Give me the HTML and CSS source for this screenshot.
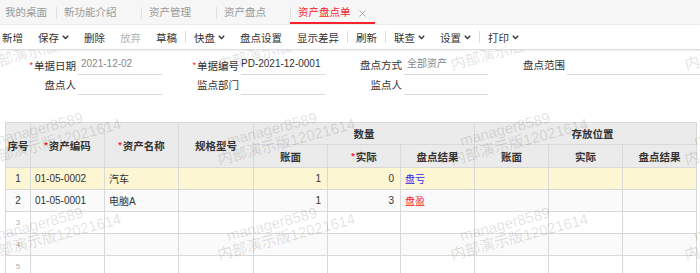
FILE: index.html
```html
<!DOCTYPE html>
<html lang="zh-CN">
<head>
  <meta charset="UTF-8" />
  <meta name="viewport" content="width=device-width, initial-scale=1" />
  <title>资产盘点单</title>
  <link rel="stylesheet" href="styles.css">
</head>
<body>

  <div class="tabs">
    <div class="tab tab-first">我的桌面</div>
    <div class="tab tab-wide">新功能介绍</div>
    <div class="tab">资产管理</div>
    <div class="tab tab-narrow">资产盘点</div>
    <div class="tab tab-wide tab-active">资产盘点单
      <svg class="tab-close" width="7" height="7" viewBox="0 0 7 7"><path d="M0.5 0.5L6.5 6.5M6.5 0.5L0.5 6.5" stroke="#aaa" stroke-width="1"/></svg>
    </div>
  </div>

  <div class="toolbar">
    <span class="tool">新增</span>
    <span class="tool">保存<svg class="caret" width="7" height="5" viewBox="0 0 7 5"><path d="M0.8 0.8L3.5 3.5L6.2 0.8" fill="none" stroke="#333" stroke-width="1.4"/></svg></span>
    <span class="tool">删除</span>
    <span class="tool tool-off">放弃</span>
    <span class="tool">草稿</span>
    <span class="tool-sep"></span>
    <span class="tool">快盘<svg class="caret" width="7" height="5" viewBox="0 0 7 5"><path d="M0.8 0.8L3.5 3.5L6.2 0.8" fill="none" stroke="#333" stroke-width="1.4"/></svg></span>
    <span class="tool">盘点设置</span>
    <span class="tool">显示差异</span>
    <span class="tool-sep"></span>
    <span class="tool">刷新</span>
    <span class="tool-sep"></span>
    <span class="tool">联查<svg class="caret" width="7" height="5" viewBox="0 0 7 5"><path d="M0.8 0.8L3.5 3.5L6.2 0.8" fill="none" stroke="#333" stroke-width="1.4"/></svg></span>
    <span class="tool">设置<svg class="caret" width="7" height="5" viewBox="0 0 7 5"><path d="M0.8 0.8L3.5 3.5L6.2 0.8" fill="none" stroke="#333" stroke-width="1.4"/></svg></span>
    <span class="tool-sep"></span>
    <span class="tool">打印<svg class="caret" width="7" height="5" viewBox="0 0 7 5"><path d="M0.8 0.8L3.5 3.5L6.2 0.8" fill="none" stroke="#333" stroke-width="1.4"/></svg></span>
  </div>

  <div class="content">
    <div class="bill-form">
      <div class="field">
        <label class="field-label"><i class="req">*</i>单据日期</label>
        <div class="field-input field-muted">2021-12-02</div>
      </div>
      <div class="field">
        <label class="field-label"><i class="req">*</i>单据编号</label>
        <div class="field-input field-code">PD-2021-12-0001</div>
      </div>
      <div class="field">
        <label class="field-label">盘点方式</label>
        <div class="field-input field-muted">全部资产</div>
      </div>
      <div class="field field-last">
        <label class="field-label">盘点范围</label>
        <div class="field-input"></div>
      </div>
      <div class="field">
        <label class="field-label">盘点人</label>
        <div class="field-input"></div>
      </div>
      <div class="field">
        <label class="field-label">监点部门</label>
        <div class="field-input"></div>
      </div>
      <div class="field">
        <label class="field-label">监点人</label>
        <div class="field-input"></div>
      </div>
    </div>

    <table class="grid">
      <colgroup>
        <col style="width:25px"><col style="width:74px"><col style="width:74px"><col style="width:75px"><col style="width:74px">
        <col style="width:73px"><col style="width:74px"><col style="width:74px"><col style="width:74px"><col style="width:74px">
      </colgroup>
      <thead>
        <tr class="head-top">
          <th rowspan="2">序号</th>
          <th rowspan="2"><i class="req">*</i>资产编码</th>
          <th rowspan="2"><i class="req">*</i>资产名称</th>
          <th rowspan="2">规格型号</th>
          <th colspan="3">数量</th>
          <th colspan="3" class="th-shift">存放位置</th>
        </tr>
        <tr class="head-sub">
          <th>账面</th>
          <th><i class="req">*</i>实际</th>
          <th>盘点结果</th>
          <th>账面</th>
          <th>实际</th>
          <th>盘点结果</th>
        </tr>
      </thead>
      <tbody>
        <tr class="row-current">
          <td class="seq">1</td><td>01-05-0002</td><td>汽车</td><td></td>
          <td class="num">1</td><td class="num">0</td><td><span class="loss">盘亏</span></td>
          <td></td><td></td><td></td>
        </tr>
        <tr class="row-even">
          <td class="seq">2</td><td>01-05-0001</td><td>电脑A</td><td></td>
          <td class="num">1</td><td class="num">3</td><td><span class="gain">盘盈</span></td>
          <td></td><td></td><td></td>
        </tr>
        <tr>
          <td class="seq seq-empty">3</td><td></td><td></td><td></td><td></td><td></td><td></td><td></td><td></td><td></td>
        </tr>
        <tr class="row-even">
          <td class="seq seq-empty">4</td><td></td><td></td><td></td><td></td><td></td><td></td><td></td><td></td><td></td>
        </tr>
        <tr>
          <td class="seq seq-empty">5</td><td></td><td></td><td></td><td></td><td></td><td></td><td></td><td></td><td></td>
        </tr>
      </tbody>
    </table>

    <div class="watermarks">
      <div class="wm" style="left:-14px;top:40px"><span>manager8589</span><span>内部演示版12021614</span></div>
      <div class="wm" style="left:220px;top:40px"><span>manager8589</span><span>内部演示版12021614</span></div>
      <div class="wm" style="left:453px;top:40px"><span>manager8589</span><span>内部演示版12021614</span></div>
      <div class="wm" style="left:687px;top:40px"><span>manager8589</span><span>内部演示版12021614</span></div>
      <div class="wm" style="left:-14px;top:135px"><span>manager8589</span><span>内部演示版12021614</span></div>
      <div class="wm" style="left:220px;top:135px"><span>manager8589</span><span>内部演示版12021614</span></div>
      <div class="wm" style="left:453px;top:135px"><span>manager8589</span><span>内部演示版12021614</span></div>
      <div class="wm" style="left:687px;top:135px"><span>manager8589</span><span>内部演示版12021614</span></div>
      <div class="wm" style="left:-14px;top:230px"><span>manager8589</span><span>内部演示版12021614</span></div>
      <div class="wm" style="left:220px;top:230px"><span>manager8589</span><span>内部演示版12021614</span></div>
      <div class="wm" style="left:453px;top:230px"><span>manager8589</span><span>内部演示版12021614</span></div>
      <div class="wm" style="left:687px;top:230px"><span>manager8589</span><span>内部演示版12021614</span></div>
    </div>
  </div>

</body>
</html>
```

FILE: styles.css
```css
body {
  margin: 0;
  font-family: "Liberation Sans", "Noto Sans CJK SC", sans-serif;
  font-size: 10.5px;
  color: #333;
  background: #fff;
  overflow: hidden;
}

/* tab strip */
.tabs {
  display: flex;
  height: 25px;
  background: #f6f6f6;
  border-bottom: 1px solid #ececec;
  box-sizing: border-box;
}

.tab {
  position: relative;
  box-sizing: border-box;
  width: 75px;
  padding-left: 8px;
  line-height: 24px;
  color: #999;
  white-space: nowrap;
}

.tab::before {
  content: "";
  position: absolute;
  left: 0;
  top: 7px;
  width: 1px;
  height: 12px;
  background: #e0e0e0;
}

.tab-first {
  width: 56px;
  padding-left: 5px;
}

.tab-first::before {
  display: none;
}

.tab-wide {
  width: 85px;
}

.tab-narrow {
  width: 74px;
}

.tab-active {
  color: #f5222d;
}

.tab-active::after {
  content: "";
  position: absolute;
  left: 0;
  right: 0;
  bottom: 0;
  height: 2px;
  background: #f5222d;
}

.tab-close {
  margin-left: 6px;
  vertical-align: -0.5px;
}

/* toolbar */
.toolbar {
  display: flex;
  align-items: center;
  gap: 15px;
  height: 24px;
  padding-left: 2px;
  border-bottom: 1px solid #dcdcdc;
  box-shadow: 0 1px 2px rgba(0,0,0,0.06);
  white-space: nowrap;
}

.tool {
  display: flex;
  align-items: center;
  color: #333;
}

.tool-off {
  color: #b5b5b5;
}

.caret {
  margin-left: 3px;
}

.tool-sep {
  width: 1px;
  height: 12px;
  background: #dcdcdc;
  margin: 0 -7px;
}

/* content */
.content {
  position: relative;
  height: 224px;
  overflow: hidden;
}

.bill-form {
  display: grid;
  grid-template-columns: 162px 162px 162px 1fr;
  column-gap: 1px;
  padding-top: 5px;
}

.field {
  display: flex;
  height: 20px;
}

.field-label {
  width: 76px;
  flex: none;
  text-align: right;
  line-height: 20px;
  color: #333;
  white-space: nowrap;
}

.field-input {
  width: 84px;
  margin-left: 2px;
  box-sizing: border-box;
  line-height: 18px;
  border-bottom: 1px solid #d8d8d8;
  padding-left: 3px;
  font-size: 10px;
  color: #333;
  white-space: nowrap;
}

.field-muted {
  color: #888;
}

.field-code {
  padding-left: 0;
}

.field-last .field-input {
  flex: 1;
  width: auto;
}

.req {
  font-style: normal;
  color: #f5222d;
  font-size: 9px;
  vertical-align: 2px;
  margin-right: 1px;
}

/* grid */
.grid {
  margin: 27px 0 0 5px;
  border-collapse: collapse;
  table-layout: fixed;
  width: 691px;
}

.grid th,
.grid td {
  border: 1px solid #d9d9d9;
  padding: 0;
  white-space: nowrap;
  overflow: hidden;
}

.grid th {
  background: #ebebeb;
  font-weight: bold;
  color: #333;
  text-align: center;
}

.head-top th {
  height: 21px;
}

.head-sub th {
  height: 22px;
}

.th-shift {
  padding-left: 14px !important;
}

.grid td {
  height: 21px;
  font-size: 10px;
  padding-left: 4px;
  color: #333;
}

.grid td.seq {
  padding-left: 0;
  text-align: center;
}

.grid td.seq-empty {
  color: #b0b0b0;
  font-size: 8px;
}

.grid td.num {
  text-align: right;
  padding: 0 6px 0 0;
}

.row-current td {
  background: #fdf6d3;
}

.row-even td {
  background: #fafafa;
}

.loss {
  color: #2a2ae8;
}

.gain {
  color: #f5222d;
}

/* watermark */
.watermarks {
  position: absolute;
  top: -49px;
  left: 0;
  right: 0;
  bottom: 0;
  pointer-events: none;
}

.wm {
  position: absolute;
  display: flex;
  flex-direction: column;
  transform: rotate(-15deg);
  transform-origin: 0 100%;
  font-family: "Liberation Sans", "Noto Sans CJK SC", sans-serif;
  font-size: 15px;
  line-height: 16px;
  color: rgba(0,0,0,0.13);
  white-space: nowrap;
}

.wm span:first-child {
  padding-left: 14px;
}
```
